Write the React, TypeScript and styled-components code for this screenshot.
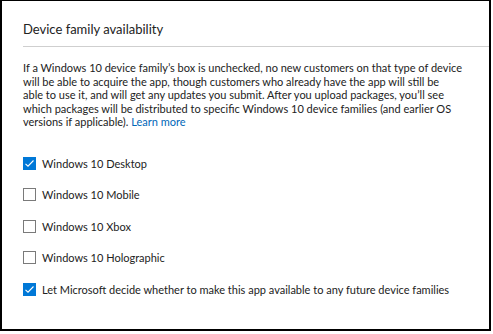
import React, { useState } from 'react'
import styled, { createGlobalStyle } from 'styled-components'

const GlobalStyle = createGlobalStyle`
  body {
    margin: 0;
    background: #ffffff;
    font-family: "Segoe UI", Lato, "Open Sans", sans-serif;
    color: #222;
  }
`

const Frame = styled.section`
  box-sizing: border-box;
  width: 491px;
  height: 331px;
  border: 2px solid #000;
  border-top-width: 1px;
  background: #fff;
`

const Header = styled.div`
  margin-left: 21px;
  padding: 19px 0 8px;
  border-bottom: 1px solid #cfcfcf;
`

const Title = styled.h2`
  margin: 0;
  font-size: 13px;
  line-height: 18px;
  font-weight: 400;
  color: #222;
`

const Body = styled.div`
  padding: 14px 20px 0 21px;
`

const Description = styled.p`
  margin: 0;
  font-size: 11px;
  line-height: 13.5px;
  color: #222;
`

const Link = styled.a`
  color: #0067b8;
  text-decoration: none;
`

const Options = styled.div`
  display: flex;
  flex-direction: column;
  gap: 15.5px;
  margin-top: 26.5px;
`

const Option = styled.label`
  display: flex;
  align-items: center;
  gap: 6px;
  height: 16px;
  font-size: 11px;
  color: #222;
  cursor: pointer;
`

const Box = styled.span<{ $checked: boolean }>`
  box-sizing: border-box;
  display: flex;
  align-items: center;
  justify-content: center;
  width: 13px;
  height: 13px;
  flex-shrink: 0;
  border: 1px solid ${(p) => (p.$checked ? '#0078d7' : '#7a7a7a')};
  background: ${(p) => (p.$checked ? '#0078d7' : '#fff')};
`

const families = [
  { label: 'Windows 10 Desktop', checked: true },
  { label: 'Windows 10 Mobile', checked: false },
  { label: 'Windows 10 Xbox', checked: false },
  { label: 'Windows 10 Holographic', checked: false },
  { label: 'Let Microsoft decide whether to make this app available to any future device families', checked: true },
]

const CheckMark = () => (
  <svg width="11" height="9" viewBox="0 0 11 9">
    <polyline points="1.5,4.8 4,7.2 9.5,1.5" fill="none" stroke="#fff" strokeWidth="1.1" />
  </svg>
)

const App = () => {
  const [values, setValues] = useState(families.map((f) => f.checked))

  const toggle = (i: number) => {
    setValues(values.map((v, idx) => (idx === i ? !v : v)))
  }

  return (
    <>
      <GlobalStyle />
      <Frame>
        <Header>
          <Title>Device family availability</Title>
        </Header>
        <Body>
          <Description>
            If a Windows 10 device family’s box is unchecked, no new customers on that type of device
            <br />
            will be able to acquire the app, though customers who already have the app will still be
            <br />
            able to use it, and will get any updates you submit. After you upload packages, you’ll see
            <br />
            which packages will be distributed to specific Windows 10 device families (and earlier OS
            <br />
            versions if applicable). <Link href="#">Learn more</Link>
          </Description>
          <Options>
            {families.map((f, i) => (
              <Option key={f.label} onClick={() => toggle(i)}>
                <Box $checked={values[i]}>{values[i] && <CheckMark />}</Box>
                {f.label}
              </Option>
            ))}
          </Options>
        </Body>
      </Frame>
    </>
  )
}

export default App
